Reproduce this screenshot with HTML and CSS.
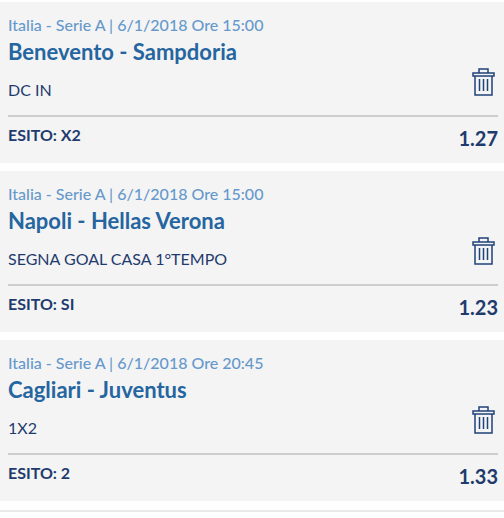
FILE: index.html
```
<!DOCTYPE html>
<html lang="it">
<head>
    <meta charset="UTF-8">
    <meta name="viewport" content="width=device-width, initial-scale=1.0">
    <title>Schedina</title>
    <link rel="stylesheet" href="styles.css">
</head>
<body>
    <!-- Trash icon shared by all the bets -->
    <svg class="icons" aria-hidden="true">
        <symbol id="trash" viewBox="0 1 24 28">
            <path d="M8 6V2h9v4M2 6h21v3H2zM4 9v19h17V9M8.500 12v12M12.500 12v12M16.500 12v12" fill="none" stroke="currentColor" stroke-width="1.500"/>
        </symbol>
    </svg>

    <main class="bet-list">
        <article class="bet">
            <p class="event">Italia - Serie A | 6/1/2018 Ore 15:00</p>
            <h2 class="match">Benevento - Sampdoria</h2>
            <div class="market-row">
                <p class="market">DC IN</p>
                <button class="remove" type="button" aria-label="Elimina"><svg><use href="#trash"/></svg></button>
            </div>
            <div class="result-row">
                <p class="result">ESITO: X2</p>
                <p class="odds">1.27</p>
            </div>
        </article>

        <article class="bet">
            <p class="event">Italia - Serie A | 6/1/2018 Ore 15:00</p>
            <h2 class="match">Napoli - Hellas Verona</h2>
            <div class="market-row">
                <p class="market">SEGNA GOAL CASA 1°TEMPO</p>
                <button class="remove" type="button" aria-label="Elimina"><svg><use href="#trash"/></svg></button>
            </div>
            <div class="result-row">
                <p class="result">ESITO: SI</p>
                <p class="odds">1.23</p>
            </div>
        </article>

        <article class="bet">
            <p class="event">Italia - Serie A | 6/1/2018 Ore 20:45</p>
            <h2 class="match">Cagliari - Juventus</h2>
            <div class="market-row">
                <p class="market">1X2</p>
                <button class="remove" type="button" aria-label="Elimina"><svg><use href="#trash"/></svg></button>
            </div>
            <div class="result-row">
                <p class="result">ESITO: 2</p>
                <p class="odds">1.33</p>
            </div>
        </article>
    </main>
</body>
</html>
```
FILE: styles.css
```
body {
    font-family: Lato, sans-serif;
    font-size: 16px;
    line-height: 20px;
    margin: 0;
    background-color: #fff;
    color: #1f3b6e;
}

p,
h2 {
    margin: 0;
}

.icons {
    display: none;
}

.bet-list {
    display: flex;
    flex-direction: column;
    gap: 8px;
    padding: 2px 0 9px;
    border-bottom: 2px solid #e9e9e9;
}

.bet {
    padding: 13px 6px 12px 8px;
    background-color: #f4f4f4;
}

.event {
    color: #6699cc;
    font-weight: 500;
}

.match {
    color: #2565a0;
    font-size: 22px;
    font-weight: bold;
    line-height: 33px;
}

.market-row {
    display: flex;
    justify-content: space-between;
    align-items: flex-end;
    padding-bottom: 15px;
    border-bottom: 2px solid #cdcdcd;
}

.remove {
    width: 24px;
    height: 28px;
    margin: 0 3px 4px 0;
    padding: 0;
    border: none;
    background: none;
    color: #1f4279;
    cursor: pointer;
}

.remove svg {
    display: block;
    width: 24px;
    height: 28px;
}

.result-row {
    display: flex;
    justify-content: space-between;
    padding-top: 8px;
    font-weight: bold;
}

.odds {
    font-size: 20px;
    line-height: 26px;
}
```
